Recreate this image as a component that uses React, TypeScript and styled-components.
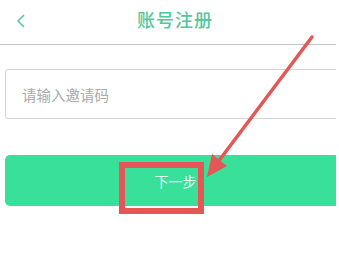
import React from 'react';
import styled, { createGlobalStyle } from 'styled-components';

const GlobalStyle = createGlobalStyle`
  html, body {
    margin: 0;
    padding: 0;
    background: #fff;
    font-family: "Noto Sans CJK SC", "Noto Sans", sans-serif;
  }
`;

const Screen = styled.div`
  position: relative;
  width: 336px;
  height: 270px;
  overflow: hidden;
  background: #fff;
`;

const Header = styled.div`
  display: flex;
  align-items: center;
  height: 44px;
  padding: 0 0 0 16px;
  border-bottom: 1px solid #c4c4c4;
  margin-right: -10px;
`;

const Back = styled.div`
  width: 12px;
  height: 14px;
  margin-bottom: 3px;
  display: flex;
  align-items: center;
`;

const Title = styled.h1`
  flex: 1;
  margin: 0 0 7px 0;
  padding-right: 24px;
  text-align: center;
  font-size: 18px;
  font-weight: 500;
  color: #52c79b;
  letter-spacing: 1px;
`;

const Field = styled.div`
  display: flex;
  align-items: center;
  height: 48px;
  margin: 24px -10px 0 5px;
  padding: 0 16px;
  border: 1px solid #d4d4d4;
  border-radius: 3px;
  font-size: 14.5px;
  color: #aaaaaa;
`;

const NextButton = styled.div`
  display: flex;
  align-items: center;
  justify-content: center;
  height: 51px;
  margin: 36px -10px 0 5px;
  border-radius: 5px;
  background: #38e09a;
  color: #e8fbf2;
  font-size: 14px;
`;

const Mark = styled.div`
  position: absolute;
  left: 119px;
  top: 162px;
  width: 85px;
  height: 52px;
  box-sizing: border-box;
  border: 6px solid #e55656;
`;

const Arrow = styled.svg`
  position: absolute;
  left: 0;
  top: 0;
  pointer-events: none;
`;

export default function App() {
  return (
    <>
      <GlobalStyle />
      <Screen>
        <Header>
          <Back>
            <svg width="10" height="14" viewBox="0 0 10 14">
              <polyline points="8,1 2,7 8,13" fill="none" stroke="#5cc7a6" strokeWidth="1.6" />
            </svg>
          </Back>
          <Title>账号注册</Title>
        </Header>
        <Field>请输入邀请码</Field>
        <NextButton>下一步</NextButton>
        <Mark />
        <Arrow width="339" height="270" viewBox="0 0 339 270">
          <line x1="312" y1="37" x2="218" y2="162" stroke="#e55656" strokeWidth="3.5" strokeLinecap="round" />
          <polygon points="207,177 212,154 227,166" fill="#e55656" />
        </Arrow>
      </Screen>
    </>
  );
}
